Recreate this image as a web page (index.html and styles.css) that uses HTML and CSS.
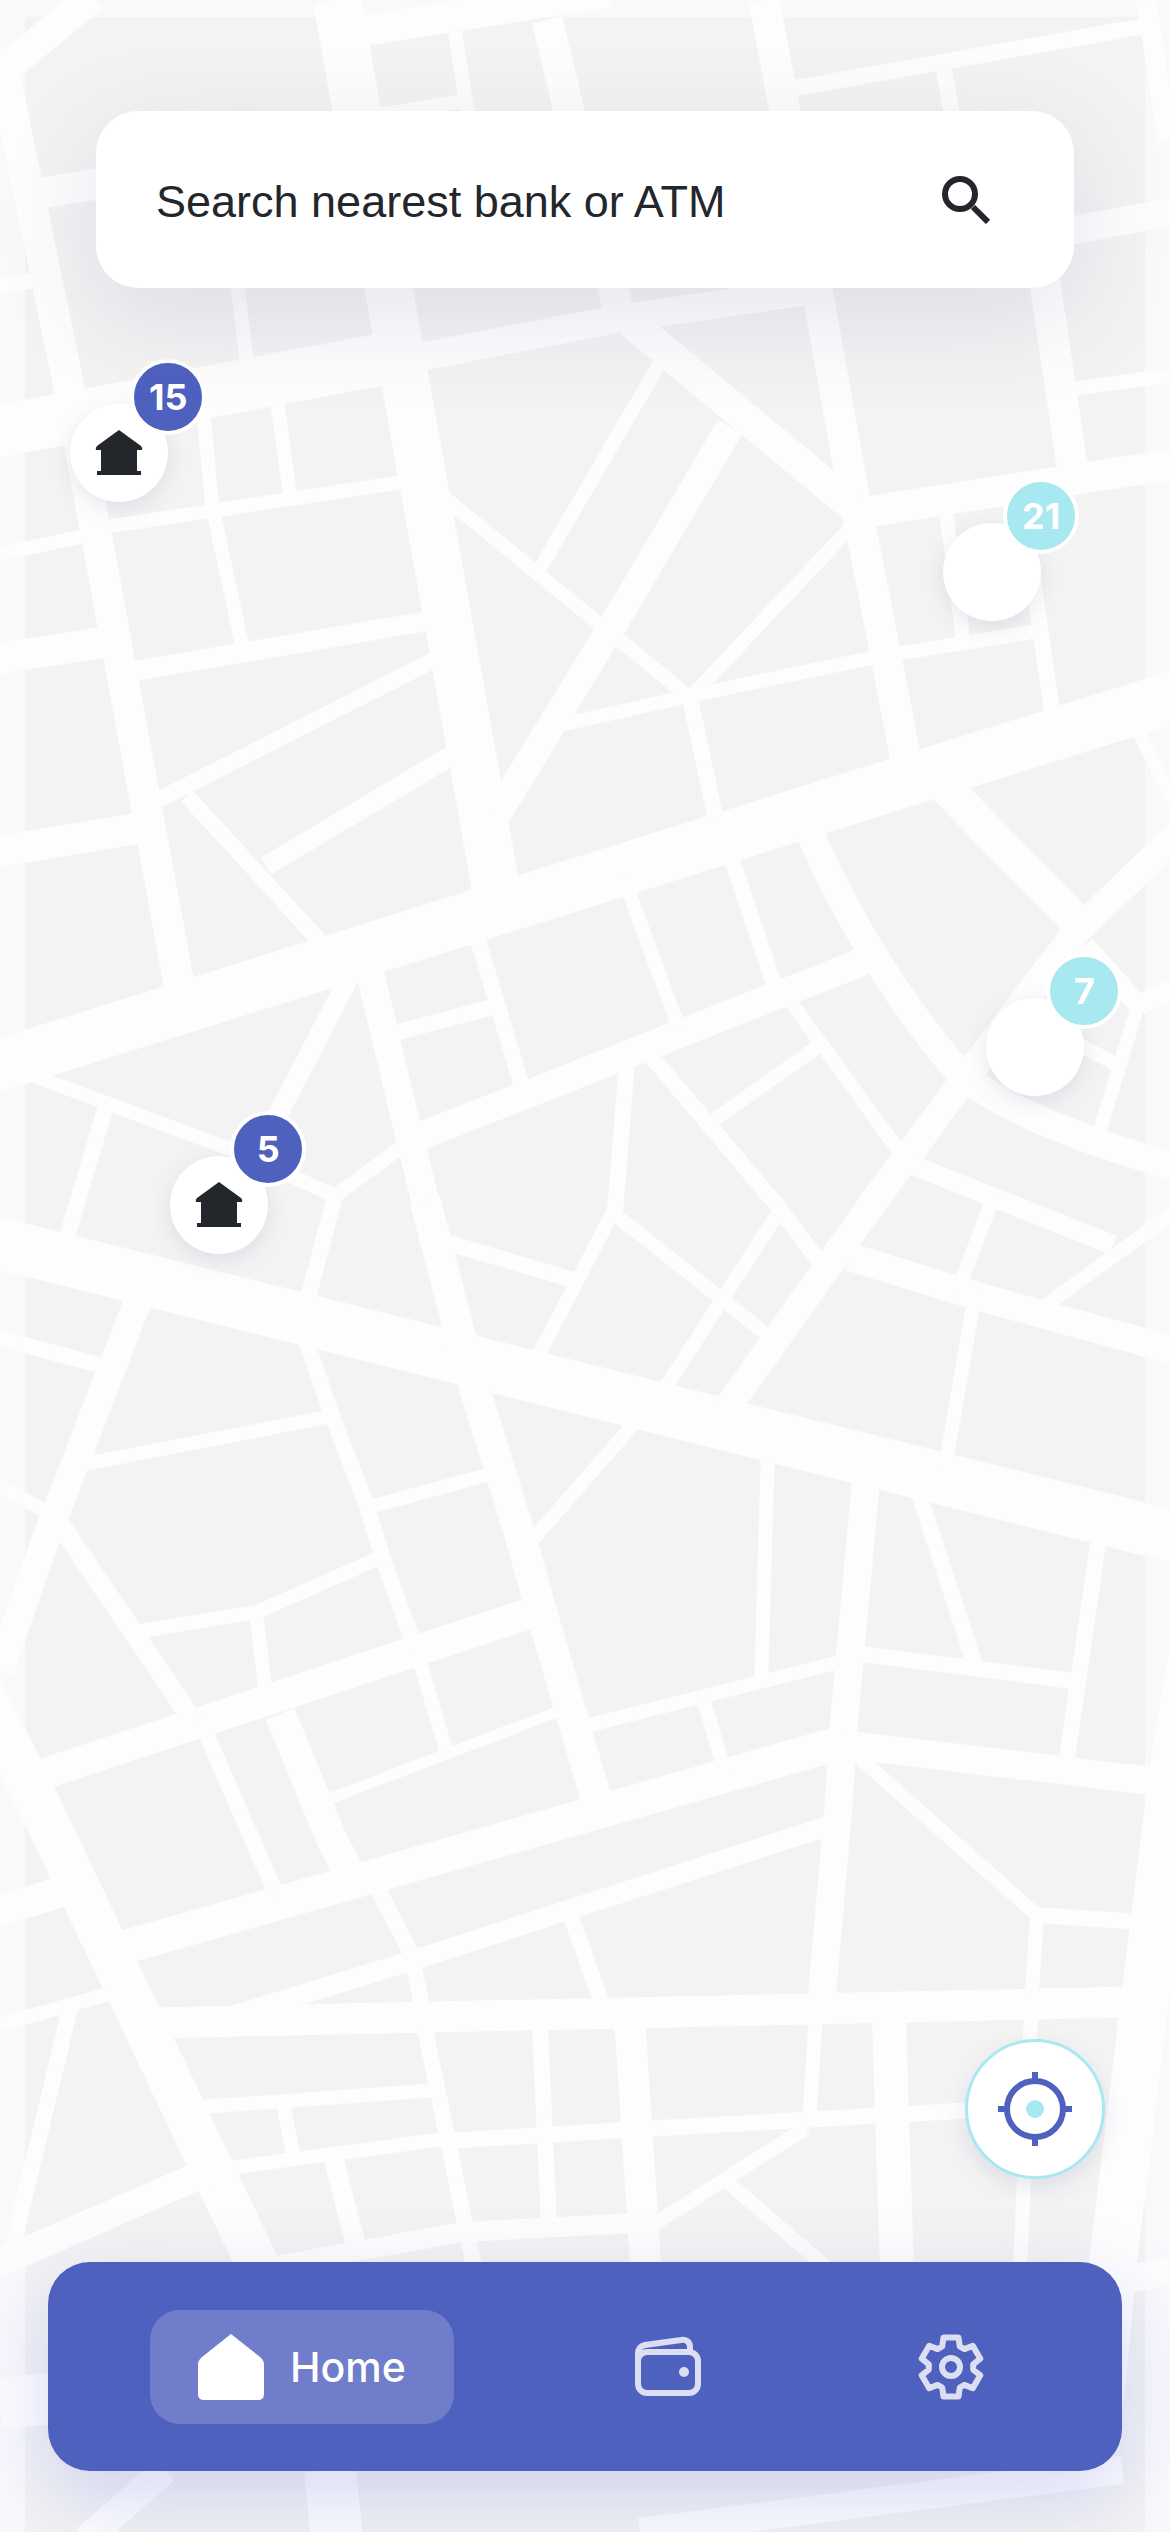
FILE: index.html
```html
<!DOCTYPE html>
<html lang="en">
<head>
    <meta charset="UTF-8">
    <meta name="viewport" content="width=device-width, initial-scale=1.0">
    <title>Find a bank</title>
    <link rel="stylesheet" href="styles.css">
</head>
<body>
    <div class="app">
        <div class="map">
            <svg class="streets" viewBox="0 0 1170 2532" preserveAspectRatio="xMidYMid slice" aria-hidden="true">
                <rect class="ground" x="25" y="17" width="1120" height="2515"/>
                <!-- main roads -->
                <g stroke-width="52">
                    <path d="M-10 1068L1180 695"/>
                    <path d="M-10 1241L1180 1538"/>
                    <path d="M-10 433L400 356"/>
                    <path d="M0 2404L50 2398"/>
                    <path d="M330 2470L337 2540"/>
                </g>
                <g stroke-width="48">
                    <path d="M337 0L498 900"/>
                    <path d="M1195 1640L1172 1780L1143 2016L1113 2262L1100 2400"/>
                </g>
                <g stroke-width="43">
                    <path d="M-19 1688L37 1800L131 1998L254 2257L290 2340"/>
                </g>
                <!-- avenues -->
                <g stroke-width="34">
                    <path d="M125 1947L840 1743"/>
                    <path d="M945 787L1080 925"/>
                    <path d="M889 2020L897 2270"/>
                </g>
                <g stroke-width="31">
                    <path d="M93 -4L4 70"/>
                    <path d="M0 50L11 106L70 392L181 995"/>
                    <path d="M30 195L110 182"/>
                    <path d="M360 31L610 -8"/>
                    <path d="M547 20L569 111L613 288L617 306"/>
                    <path d="M764 0L785 111L818 295L852 485L875 600L907 765"/>
                    <path d="M1040 250L1072 465"/>
                    <path d="M860 513L1180 463"/>
                    <path d="M630 322L852 506"/>
                    <path d="M-5 659L106 642"/>
                    <path d="M-5 852L140 828"/>
                    <path d="M425 1200L459 1331L475 1390L520 1535L545 1624L596 1798"/>
                    <path d="M40 1775L528 1614"/>
                    <path d="M280 1714L332 1840L348 1870"/>
                    <path d="M155 2023L1130 2002"/>
                    <path d="M630 2024L646 2270"/>
                    <path d="M-5 1912L70 1889"/>
                </g>
                <g stroke-width="28">
                    <path d="M410 359L616 319L830 288"/>
                    <path d="M1064 232L1180 210"/>
                    <path d="M730 427L628 600L495 818"/>
                    <path d="M1180 832L1078 930L960 1085L875 1200L725 1411"/>
                    <path d="M805 822Q864 960 955 1068C995 1107 1080 1140 1180 1168"/>
                    <path d="M416 1138L872 958"/>
                    <path d="M367 960L409 1135L425 1200"/>
                    <path d="M142 1290L45 1541L0 1670"/>
                    <path d="M866 1480L843 1733L839 1800L822 1995"/>
                    <path d="M840 1744L875 1748L1160 1782"/>
                    <path d="M850 1257L980 1297L1180 1352"/>
                    <path d="M1130 2279L1180 2269"/>
                    <path d="M640 2532L1122 2470"/>
                    <path d="M165 2470L85 2540"/>
                    <path d="M205 2173L10 2258L-10 2266"/>
                </g>
                <!-- streets -->
                <g stroke-width="20">
                    <path d="M1085 945L1140 1007"/>
                    <path d="M1140 1005L1180 985"/>
                    <path d="M1146 0L1168 140"/>
                    <path d="M128 672L434 620"/>
                    <path d="M352 972L270 1130"/>
                    <path d="M235 2015L414 1960L828 1826"/>
                    <path d="M333 2156L356 2246"/>
                    <path d="M275 2266L463 2232L635 2223"/>
                    <path d="M55 1517L131 1629L190 1716"/>
                    <path d="M266 866L454 754"/>
                    <path d="M905 1162L1000 1200L1113 1245"/>
                </g>
                <g stroke-width="16">
                    <path d="M790 89L1145 26"/>
                    <path d="M944 70L952 115"/>
                    <path d="M-5 287L40 279"/>
                    <path d="M1030 560L1052 710"/>
                    <path d="M690 698L716 820"/>
                    <path d="M158 800L434 660"/>
                    <path d="M187 796L326 948"/>
                    <path d="M106 1106L66 1240"/>
                    <path d="M335 1196L306 1305"/>
                    <path d="M472 920L523 1090"/>
                    <path d="M395 1033L496 1006"/>
                    <path d="M727 845L776 990"/>
                    <path d="M650 1055L775 1203L820 1262"/>
                    <path d="M627 1062L615 1212"/>
                    <path d="M445 1242L577 1281"/>
                    <path d="M-5 1337L110 1368"/>
                    <path d="M304 1334L330 1410L366 1504L383 1559L416 1650"/>
                    <path d="M200 1720L235 1800L277 1896"/>
                    <path d="M370 1874L411 1953L424 2016"/>
                    <path d="M915 1482L976 1668"/>
                    <path d="M862 1654L1080 1682"/>
                    <path d="M1100 1530L1065 1772"/>
                    <path d="M1036 1915L1140 1922"/>
                    <path d="M72 2000L12 2250"/>
                    <path d="M568 1908L605 2012"/>
                    <path d="M424 2024L465 2224L475 2270"/>
                    <path d="M446 2141L640 2129L660 2128L820 2119L975 2110"/>
                    <path d="M540 2026L549 2226"/>
                </g>
                <g stroke-width="14">
                    <path d="M455 32L468 115"/>
                    <path d="M378 115L464 101"/>
                    <path d="M1065 390L1180 374"/>
                    <path d="M237 280L248 372"/>
                    <path d="M203 408L212 505L243 650"/>
                    <path d="M277 400L291 502"/>
                    <path d="M98 528L410 481"/>
                    <path d="M-5 555L90 535"/>
                    <path d="M664 356L538 572"/>
                    <path d="M445 498L597 622L686 694"/>
                    <path d="M856 522L782 600L692 696"/>
                    <path d="M560 725L685 697L871 658L1037 631"/>
                    <path d="M945 505L963 638"/>
                    <path d="M1134 722L1178 810"/>
                    <path d="M34 1076L230 1149L338 1197"/>
                    <path d="M332 1198L408 1142"/>
                    <path d="M623 876L679 1028"/>
                    <path d="M785 994L904 1158"/>
                    <path d="M820 1045L707 1125"/>
                    <path d="M615 1208L534 1364"/>
                    <path d="M613 1213L771 1338"/>
                    <path d="M780 1210L660 1396"/>
                    <path d="M85 1464L332 1416"/>
                    <path d="M-5 1483L58 1518"/>
                    <path d="M370 1507L494 1473"/>
                    <path d="M637 1420L528 1545"/>
                    <path d="M134 1632L257 1612L384 1556"/>
                    <path d="M256 1612L266 1696"/>
                    <path d="M417 1652L446 1750"/>
                    <path d="M768 1448L761 1685"/>
                    <path d="M578 1728L844 1661"/>
                    <path d="M703 1698L725 1772"/>
                    <path d="M852 1751L907 1800L1038 1916"/>
                    <path d="M1037 1915L1032 1990L1020 2270"/>
                    <path d="M-5 2026L116 1992"/>
                    <path d="M200 2107L438 2090"/>
                    <path d="M283 2104L294 2158"/>
                    <path d="M228 2168L452 2138"/>
                    <path d="M816 2014L809 2124"/>
                    <path d="M648 2228L806 2128"/>
                    <path d="M723 2178L825 2266"/>
                    <path d="M975 1294L945 1468"/>
                    <path d="M993 1198L958 1290"/>
                    <path d="M1180 1208L1042 1308"/>
                    <path d="M1070 1040L1118 1065"/>
                    <path d="M1138 1005L1100 1130"/>
                </g>
                <path d="M326 1800L562 1710" stroke-width="11"/>
            </svg>

            <button class="pin pin-north" type="button" aria-label="Banks nearby">
                <svg class="pin-icon" viewBox="0 0 48 46"><path d="M24 0L46 16Q48 18 47 20H42V41H46V45H2V41H6V20H1Q0 18 2 16Z"/></svg>
                <span class="badge">15</span>
            </button>
            <button class="pin pin-east" type="button" aria-label="ATMs nearby">
                <span class="badge badge-atm">21</span>
            </button>
            <button class="pin pin-corner" type="button" aria-label="ATMs nearby">
                <span class="badge badge-atm">7</span>
            </button>
            <button class="pin pin-west" type="button" aria-label="Banks nearby">
                <svg class="pin-icon" viewBox="0 0 48 46"><path d="M24 0L46 16Q48 18 47 20H42V41H46V45H2V41H6V20H1Q0 18 2 16Z"/></svg>
                <span class="badge">5</span>
            </button>
        </div>

        <form class="search">
            <input class="search-input" type="text" placeholder="Search nearest bank or ATM" aria-label="Search nearest bank or ATM">
            <button class="search-button" type="submit" aria-label="Search">
                <svg class="search-icon" viewBox="0 0 48 48">
                    <circle cx="18" cy="18" r="15"/>
                    <path d="M31 31L46 46"/>
                </svg>
            </button>
        </form>

        <div class="bottom">
            <button class="locate" type="button" aria-label="My location">
                <svg class="locate-icon" viewBox="0 0 74 74">
                    <circle class="ring" cx="37" cy="37" r="28"/>
                    <path class="ring" d="M37 0V8M37 66V74M0 37H8M66 37H74"/>
                    <circle class="dot" cx="37" cy="37" r="9"/>
                </svg>
            </button>

            <nav class="tabs">
                <a class="tab tab-active" href="#home">
                    <svg class="tab-icon" viewBox="0 0 66 66"><path class="solid" d="M33 0L62 23Q66 26 66 31V60Q66 66 60 66H6Q0 66 0 60V31Q0 26 4 23Z"/></svg>
                    <span>Home</span>
                </a>
                <a class="tab" href="#wallet" aria-label="Wallet">
                    <svg class="tab-icon" viewBox="0 0 66 66">
                        <rect x="3" y="18" width="60" height="41" rx="9"/>
                        <path d="M3 27V20C3 15 6 12 10 11L46 6C51 5 55 8 55 13V18"/>
                        <circle class="solid" cx="49" cy="38" r="5"/>
                    </svg>
                </a>
                <a class="tab" href="#settings" aria-label="Settings">
                    <svg class="tab-icon" viewBox="-33 -33 66 66">
                        <path d="M-7.5 -29.5H7.5L8.8 -20.5L13.4 -17.9L21.8 -21.2L29.3 -8.3L22.2 -2.6V2.6L29.3 8.3L21.8 21.2L13.4 17.9L8.8 20.5L7.5 29.5H-7.5L-8.8 20.5L-13.4 17.9L-21.8 21.2L-29.3 8.3L-22.2 2.6V-2.6L-29.3 -8.3L-21.8 -21.2L-13.4 -17.9L-8.8 -20.5Z"/>
                        <circle r="9"/>
                    </svg>
                </a>
            </nav>
        </div>
    </div>
</body>
</html>
```

FILE: styles.css
```css
* {
    box-sizing: border-box;
}
body {
    margin: 0;
    font-family: 'Liberation Sans', Arial, sans-serif;
    background-color: #f9f9fc;
    color: #23262b;
}
button {
    padding: 0;
    border: none;
    font-family: inherit;
    cursor: pointer;
}
.app {
    position: relative;
    display: flex;
    flex-direction: column;
    justify-content: space-between;
    min-height: 100vh;
    overflow: hidden;
}

/* map */
.map {
    position: absolute;
    inset: 0;
}
.streets {
    display: block;
    width: 100%;
    height: 100%;
    fill: none;
    stroke: #fdfdfd;
}
.ground {
    fill: #f3f3f3;
    stroke: none;
}
.pin {
    position: absolute;
    display: flex;
    align-items: center;
    justify-content: center;
    width: 98px;
    height: 98px;
    margin: -49px 0 0 -49px;
    border-radius: 50%;
    background: white;
    box-shadow: 0 6px 20px rgba(79, 70, 150, 0.12);
}
.pin-north {
    left: 10.2%;
    top: 17.9%;
}
.pin-east {
    left: 84.8%;
    top: 22.6%;
}
.pin-corner {
    left: 88.5%;
    top: 41.35%;
}
.pin-west {
    left: 18.75%;
    top: 47.6%;
}
.pin-icon {
    width: 48px;
    height: 46px;
    fill: #23262b;
}
.badge {
    position: absolute;
    top: -45px;
    right: -38px;
    width: 76px;
    height: 76px;
    border: 4px solid white;
    border-radius: 50%;
    background-color: #4f61bf;
    color: white;
    font-family: Inter, sans-serif;
    font-size: 36px;
    font-weight: bold;
    line-height: 68px;
    text-align: center;
}
.badge-atm {
    background-color: #a8e8f0;
}

/* search */
.search {
    position: relative;
    display: flex;
    align-items: center;
    height: 177px;
    margin: 111px 96px 0;
    padding: 0 84px 0 60px;
    border-radius: 42px;
    background: white;
    box-shadow: 0 28px 100px rgba(79, 70, 150, 0.13);
}
.search-input {
    flex: 1;
    min-width: 0;
    padding: 4px 0 0;
    border: none;
    outline: none;
    background: none;
    color: #23262b;
    font-family: inherit;
    font-size: 45px;
    line-height: 60px;
}
.search-input::placeholder {
    color: #23262b;
    opacity: 1;
}
.search-button {
    background: none;
}
.search-icon {
    display: block;
    width: 48px;
    height: 48px;
    fill: none;
    stroke: #23262b;
    stroke-width: 6;
}

/* bottom */
.bottom {
    position: relative;
    display: flex;
    flex-direction: column;
    align-items: flex-end;
    gap: 83px;
    padding: 0 48px 61px;
}
.locate {
    display: flex;
    align-items: center;
    justify-content: center;
    width: 140px;
    height: 140px;
    margin-right: 17px;
    border: 3px solid #a8e8f0;
    border-radius: 50%;
    background: white;
    box-shadow: 0 8px 20px rgba(79, 70, 150, 0.12);
}
.locate-icon {
    width: 74px;
    height: 74px;
}
.ring {
    fill: none;
    stroke: #4f61bf;
    stroke-width: 6;
}
.dot {
    fill: #a8e8f0;
}
.tabs {
    display: flex;
    align-items: center;
    justify-content: space-between;
    width: 100%;
    height: 209px;
    padding: 0 102px;
    border-radius: 42px;
    background-color: #4f61bf;
    box-shadow: 0 28px 80px rgba(79, 97, 230, 0.22);
}
.tab {
    display: flex;
    align-items: center;
    gap: 26px;
    padding: 24px 36px;
    border-radius: 30px;
    color: #dcdff2;
    font-family: Inter, sans-serif;
    font-size: 41px;
    font-weight: 500;
    line-height: 60px;
    text-decoration: none;
}
.tab-active {
    padding: 24px 48px;
    background-color: #6f7dca;
    color: white;
}
.tab-icon {
    width: 66px;
    height: 66px;
    fill: none;
    stroke: currentColor;
    stroke-width: 6;
    stroke-linejoin: round;
}
.tab-icon .solid {
    fill: currentColor;
    stroke: none;
}
```
